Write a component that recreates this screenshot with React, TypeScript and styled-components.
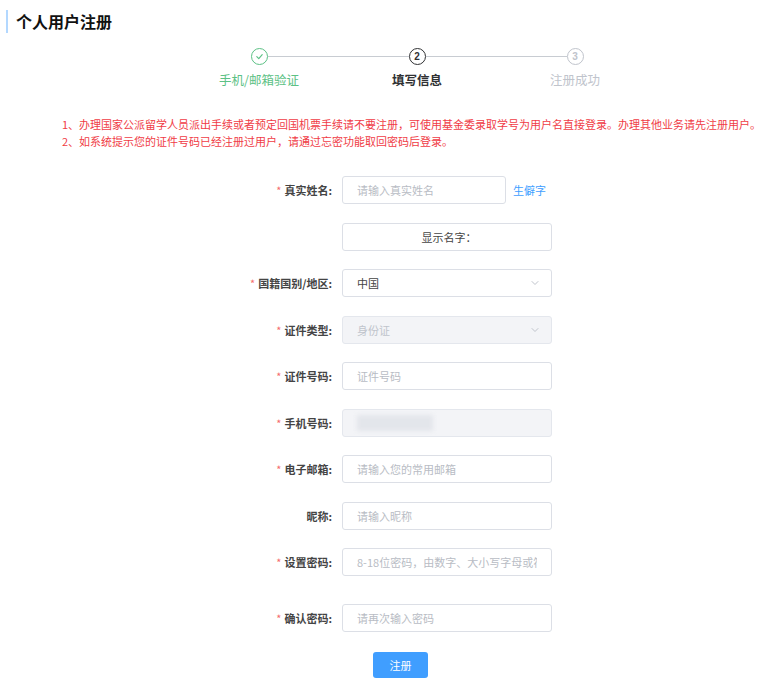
import React from "react";
import styled, { createGlobalStyle } from "styled-components";
import { ChevronDown } from "lucide-react";

const GlobalStyle = createGlobalStyle`
  html, body {
    margin: 0;
    padding: 0;
    background: #fff;
    font-family: "Noto Sans CJK SC", "Noto Sans", "Liberation Sans", sans-serif;
  }
`;

const Page = styled.div`
  width: 768px;
  height: 688px;
  overflow: hidden;
  padding-top: 10px;
  box-sizing: border-box;
`;

const Title = styled.h2`
  margin: 0 0 0 6px;
  padding-left: 8px;
  border-left: 2px solid #b3d8ff;
  height: 23px;
  line-height: 23px;
  font-size: 16px;
  font-weight: 700;
  color: #111;
`;

const Steps = styled.div`
  display: flex;
  margin: 15px 0 0 180px;
  width: 474px;
`;

const Step = styled.div`
  flex: 1;
  display: flex;
  flex-direction: column;
  align-items: center;
`;

const StepHead = styled.div`
  display: flex;
  align-items: center;
  width: 100%;
  height: 17px;
`;

const Line = styled.div<{ $hidden?: boolean }>`
  flex: 1;
  height: 1px;
  background: ${(p) => (p.$hidden ? "transparent" : "#c8ccd2")};
`;

const Circle = styled.div<{ $color: string; $bold?: boolean }>`
  width: 17px;
  height: 17px;
  box-sizing: border-box;
  border-radius: 50%;
  border: ${(p) => (p.$bold ? "1.5px" : "1px")} solid ${(p) => p.$color};
  color: ${(p) => p.$color};
  display: flex;
  align-items: center;
  justify-content: center;
  font-size: 10px;
  font-weight: 700;
  font-family: "Liberation Sans", sans-serif;
  flex-shrink: 0;
`;

const StepLabel = styled.div<{ $color: string; $bold?: boolean }>`
  margin-top: 7px;
  line-height: 16px;
  font-size: 12.5px;
  color: ${(p) => p.$color};
  font-weight: ${(p) => (p.$bold ? 700 : 400)};
`;

const Notice = styled.div`
  margin: 28px 0 0 62px;
  color: #f03c46;
  font-size: 11px;
  line-height: 17px;
  white-space: nowrap;
`;

const Form = styled.form`
  margin-top: 26px;
  padding-left: 222px;
`;

const Row = styled.div<{ $gap?: number }>`
  display: flex;
  align-items: center;
  height: 28px;
  margin-bottom: ${(p) => p.$gap ?? 18.5}px;
`;

const Label = styled.label`
  width: 120px;
  padding-right: 10px;
  box-sizing: border-box;
  text-align: right;
  font-size: 11px;
  font-weight: 700;
  color: #444;
  white-space: nowrap;
`;

const Star = styled.span`
  color: #f56c6c;
  font-weight: 400;
  margin-right: 3px;
`;

const Input = styled.input<{ $width?: number }>`
  width: ${(p) => p.$width ?? 210}px;
  height: 28px;
  box-sizing: border-box;
  border: 1px solid #dcdfe6;
  border-radius: 3px;
  padding: 0 14px;
  font-size: 11px;
  font-family: inherit;
  color: #606266;
  outline: none;
  &::placeholder {
    color: #b8bcc4;
  }
`;

const Box = styled.div<{ $disabled?: boolean; $center?: boolean }>`
  width: 210px;
  height: 28px;
  box-sizing: border-box;
  border: 1px solid ${(p) => (p.$disabled ? "#e4e7ed" : "#dcdfe6")};
  border-radius: 3px;
  background: ${(p) => (p.$disabled ? "#f3f4f7" : "#fff")};
  padding: 0 10px 0 14px;
  display: flex;
  align-items: center;
  justify-content: ${(p) => (p.$center ? "center" : "space-between")};
  font-size: 11px;
  color: ${(p) => (p.$disabled ? "#c0c4cc" : "#444")};
`;

const Blurred = styled.span`
  width: 76px;
  height: 16px;
  background: #e3e6eb;
  filter: blur(2px);
`;

const LinkText = styled.a`
  margin-left: 7px;
  font-size: 11px;
  color: #409eff;
  cursor: pointer;
`;

const Submit = styled.button`
  margin-left: 151px;
  width: 55px;
  height: 26px;
  border: none;
  border-radius: 3px;
  background: #409eff;
  color: #fff;
  font-size: 11px;
  font-family: inherit;
`;

const Check = () => (
  <svg width="9" height="9" viewBox="0 0 10 10" fill="none">
    <path d="M2 5.2 L4.2 7.3 L8 3" stroke="#5cc185" strokeWidth="1.3" strokeLinecap="round" strokeLinejoin="round" />
  </svg>
);

const App: React.FC = () => {
  return (
    <Page>
      <GlobalStyle />
      <Title>个人用户注册</Title>

      <Steps>
        <Step>
          <StepHead>
            <Line $hidden />
            <Circle $color="#5cc185">
              <Check />
            </Circle>
            <Line />
          </StepHead>
          <StepLabel $color="#5cc185">手机/邮箱验证</StepLabel>
        </Step>
        <Step>
          <StepHead>
            <Line />
            <Circle $color="#303133" $bold>
              2
            </Circle>
            <Line />
          </StepHead>
          <StepLabel $color="#303133" $bold>
            填写信息
          </StepLabel>
        </Step>
        <Step>
          <StepHead>
            <Line />
            <Circle $color="#c0c4cc">3</Circle>
            <Line $hidden />
          </StepHead>
          <StepLabel $color="#c0c4cc">注册成功</StepLabel>
        </Step>
      </Steps>

      <Notice>
        1、办理国家公派留学人员派出手续或者预定回国机票手续请不要注册，可使用基金委录取学号为用户名直接登录。办理其他业务请先注册用户。
        <br />
        2、如系统提示您的证件号码已经注册过用户，请通过忘密功能取回密码后登录。
      </Notice>

      <Form onSubmit={(e) => e.preventDefault()}>
        <Row>
          <Label>
            <Star>*</Star>真实姓名:
          </Label>
          <Input $width={164} placeholder="请输入真实姓名" />
          <LinkText>生僻字</LinkText>
        </Row>
        <Row>
          <Label />
          <Box $center>显示名字：</Box>
        </Row>
        <Row>
          <Label>
            <Star>*</Star>国籍国别/地区:
          </Label>
          <Box>
            中国
            <ChevronDown size={12} color="#c0c4cc" />
          </Box>
        </Row>
        <Row>
          <Label>
            <Star>*</Star>证件类型:
          </Label>
          <Box $disabled>
            身份证
            <ChevronDown size={12} color="#c0c4cc" />
          </Box>
        </Row>
        <Row>
          <Label>
            <Star>*</Star>证件号码:
          </Label>
          <Input placeholder="证件号码" />
        </Row>
        <Row>
          <Label>
            <Star>*</Star>手机号码:
          </Label>
          <Box $disabled>
            <Blurred />
          </Box>
        </Row>
        <Row>
          <Label>
            <Star>*</Star>电子邮箱:
          </Label>
          <Input placeholder="请输入您的常用邮箱" />
        </Row>
        <Row>
          <Label>昵称:</Label>
          <Input placeholder="请输入昵称" />
        </Row>
        <Row $gap={28}>
          <Label>
            <Star>*</Star>设置密码:
          </Label>
          <Input type="password" placeholder="8-18位密码，由数字、大小写字母或符号组成" />
        </Row>
        <Row>
          <Label>
            <Star>*</Star>确认密码:
          </Label>
          <Input type="password" placeholder="请再次输入密码" />
        </Row>
        <Submit type="submit">注册</Submit>
      </Form>
    </Page>
  );
};

export default App;
